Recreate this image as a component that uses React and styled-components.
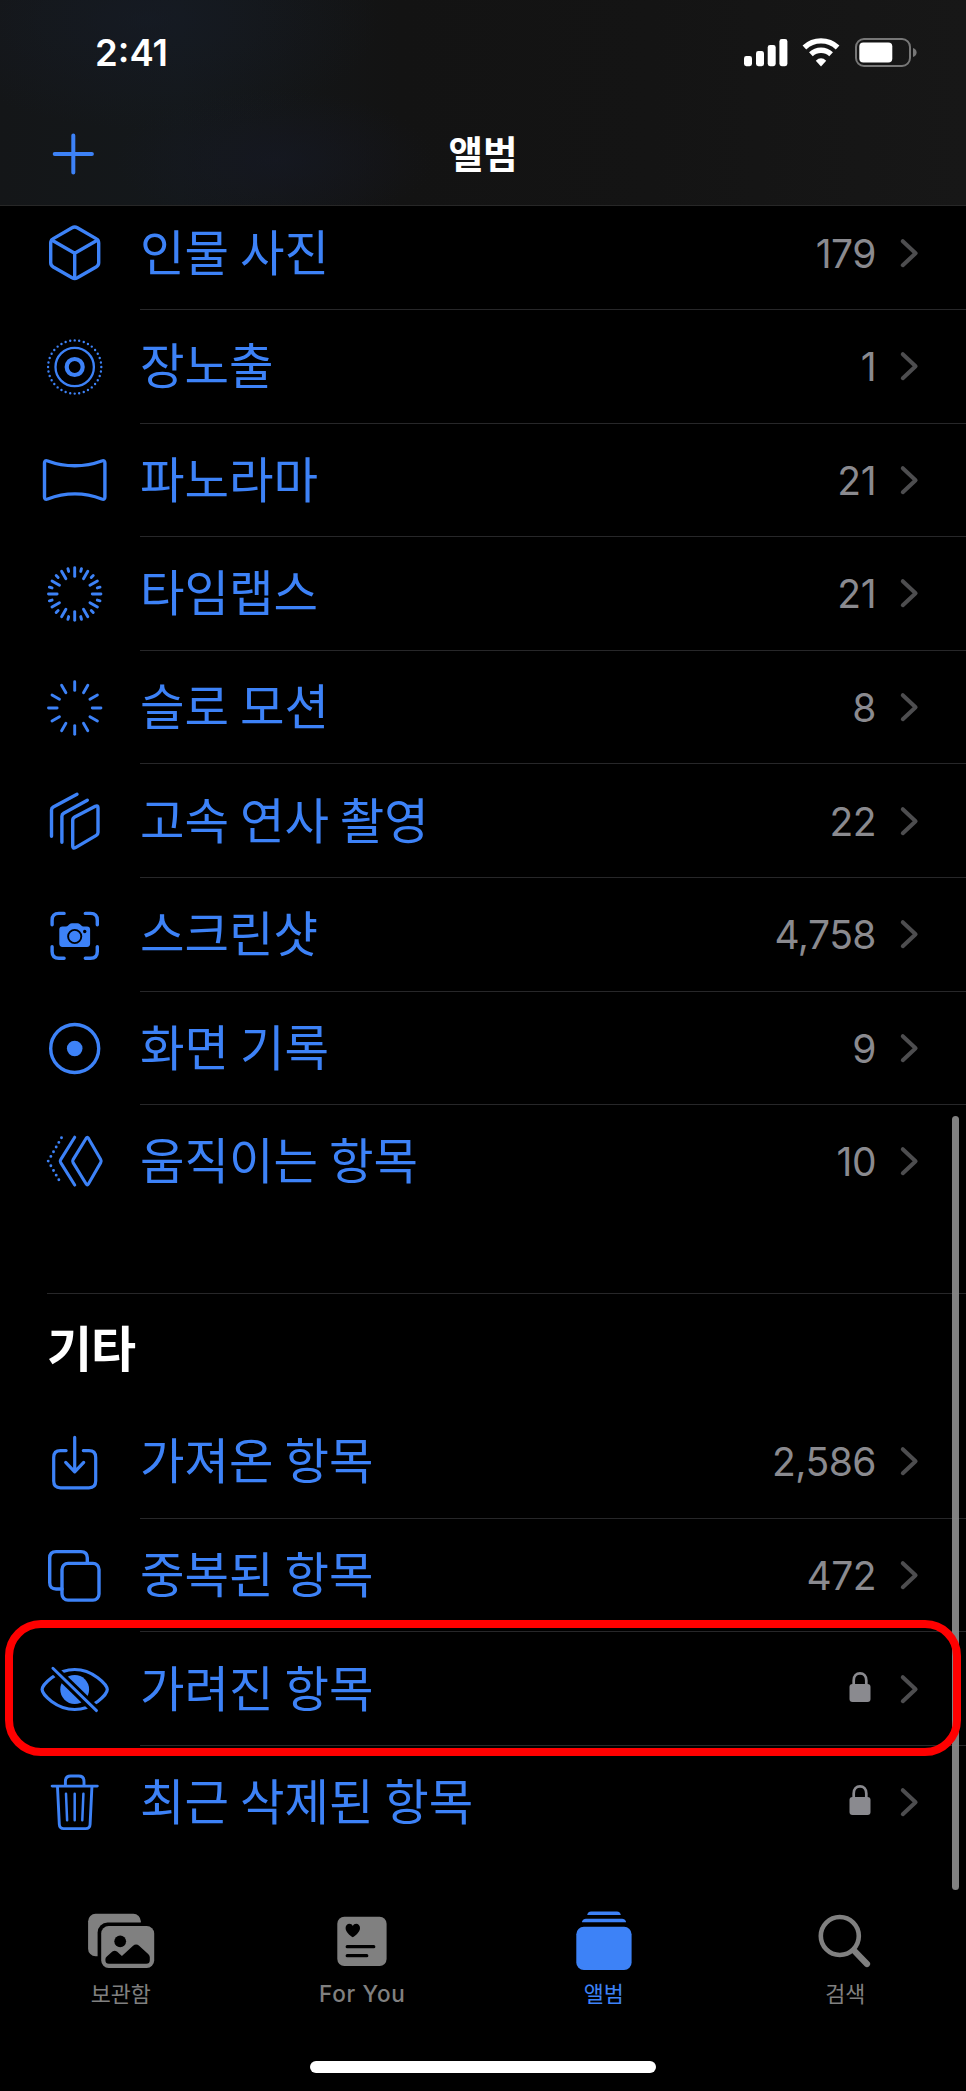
import React from 'react';
import styled, { createGlobalStyle, css } from 'styled-components';

const BLUE = '#3d82f7';
const GRAY = '#8a8a8f';
const TAB_GRAY = '#808080';
const LINE = '#272729';

const GlobalStyle = createGlobalStyle`
  * {
    box-sizing: border-box;
  }

  body {
    margin: 0;
    background: #000;
    font-family: Inter, 'Noto Sans CJK KR', sans-serif;
  }
`;

const Screen = styled.div`
  position: relative;
  width: 966px;
  height: 2091px;
  overflow: hidden;
  display: flex;
  flex-direction: column;
  background: #000;
`;

const Header = styled.header`
  position: relative;
  z-index: 1;
  flex: none;
  height: 206px;
  border-bottom: 1px solid #272727;
  background:
    radial-gradient(ellipse 230px 110px at 150px 20px, rgba(22, 28, 40, 0.6), transparent),
    radial-gradient(ellipse 160px 70px at 275px 160px, rgba(22, 25, 38, 0.6), transparent),
    linear-gradient(90deg, #141618 0, #14181b 180px, #131313 400px, #141414 650px, #171717 966px);
`;

const StatusBar = styled.div`
  height: 106px;
  padding: 0 49px 0 95px;
  display: flex;
  align-items: center;
  justify-content: space-between;
`;

const Time = styled.span`
  color: #fff;
  font-size: 36.5px;
  font-weight: 600;
  line-height: 44px;
`;

const StatusIcons = styled.svg`
  width: 176px;
  height: 34px;
  display: block;
`;

const NavBar = styled.div`
  height: 96px;
  padding: 0 49px;
  display: grid;
  grid-template-columns: 48px 1fr 48px;
  align-items: center;
`;

const AddButton = styled.button`
  padding: 0;
  border: 0;
  background: none;
  color: ${BLUE};
  line-height: 0;
`;

const Title = styled.h1`
  margin: 0;
  padding-bottom: 5px;
  color: #fff;
  font-family: 'Noto Sans CJK KR', sans-serif;
  font-size: 37.5px;
  font-weight: 700;
  line-height: 50px;
  text-align: center;
`;

const List = styled.ul`
  flex: none;
  margin: ${({ $first }) => ($first ? '-9.6px 0 0' : '0')};
  padding: 0;
  list-style: none;
`;

const Row = styled.li`
  position: relative;
  height: 113.6px;
  display: flex;

  &:last-child {
    height: 112px;
  }
`;

const IconSlot = styled.div`
  width: 140px;
  padding-left: 8px;
  display: flex;
  align-items: center;
  justify-content: center;
  color: ${BLUE};
`;

const RowBody = styled.div`
  flex: 1;
  padding-right: 45px;
  display: flex;
  align-items: center;
  border-bottom: 1px solid ${LINE};

  ${Row}:last-child & {
    border-bottom: 0;
  }
`;

const Label = styled.span`
  flex: 1;
  padding-bottom: 6px;
  color: ${BLUE};
  font-family: 'Noto Sans CJK KR', sans-serif;
  font-size: 48.4px;
  line-height: 70px;
`;

const Count = styled.span`
  margin-right: 23px;
  padding-top: 2px;
  color: ${GRAY};
  font-size: 39px;
  line-height: 50px;
  letter-spacing: -0.5px;
`;

const Highlight = styled.div`
  position: absolute;
  z-index: 2;
  top: -12.5px;
  left: 5px;
  right: 5px;
  height: 136px;
  border: 8px solid #ff0000;
  border-radius: 36px;
`;

const Section = styled.section`
  flex: none;
  margin-top: 76px;
`;

const SectionTitle = styled.h2`
  height: 112px;
  margin: 0 0 0 47px;
  padding-top: 16px;
  border-top: 1px solid ${LINE};
  color: #fff;
  font-family: 'Noto Sans CJK KR', sans-serif;
  font-size: 49px;
  font-weight: 700;
  line-height: 72px;
  letter-spacing: -1px;
`;

const TabBar = styled.nav`
  height: 202px;
  margin-top: auto;
  padding-top: 46px;
  display: grid;
  grid-template-columns: repeat(4, 1fr);
`;

const Tab = styled.div`
  display: flex;
  flex-direction: column;
  align-items: center;
  color: ${({ $active }) => ($active ? BLUE : TAB_GRAY)};
`;

const TabLabel = styled.span`
  margin-top: 2px;
  font-family: 'Noto Sans CJK KR', sans-serif;
  font-size: 21.8px;
  line-height: 32px;

  ${({ $latin }) =>
    $latin &&
    css`
      padding-top: 1px;
      font-family: Inter, sans-serif;
      font-size: 22.5px;
      font-weight: 500;
      letter-spacing: 0.7px;
    `}
`;

const HomeIndicator = styled.div`
  flex: none;
  width: 346px;
  height: 12px;
  margin: 0 auto 18.5px;
  border-radius: 6px;
  background: #fff;
`;

const ScrollThumb = styled.div`
  position: absolute;
  z-index: 1;
  top: 1116px;
  right: 7px;
  width: 7px;
  height: 774px;
  border-radius: 4px;
  background: rgba(136, 136, 136, 0.95);
`;

/* Row glyphs are drawn around the origin */
const Glyph = ({ size = 80, stroke = 3.4, shift = 0.7, children }) => (
  <svg
    width={size}
    height={size}
    viewBox={`${-size / 2 - shift} ${-size / 2} ${size} ${size}`}
    fill="none"
    stroke="currentColor"
    strokeWidth={stroke}
    strokeLinecap="round"
    strokeLinejoin="round"
  >
    {children}
  </svg>
);

const Portrait = () => (
  <Glyph>
    <path d="M-2.6 -25.2Q0 -26.7 2.6 -25.2L21.4 -14.4Q24 -12.8 24 -10V9.8Q24 12.4 21.4 14L2.6 24.8Q0 26.2 -2.6 24.8L-21.4 14Q-24 12.4 -24 9.8V-10Q-24 -12.8 -21.4 -14.4Z" />
    <path d="M-23 -13L0 0.2L23 -13M0 0.2V25" />
  </Glyph>
);

const LongExposure = () => (
  <Glyph>
    <circle r="8" strokeWidth="4.2" />
    <circle r="19.2" strokeWidth="2.3" />
    <circle r="26.6" strokeWidth="2.4" pathLength="36" strokeDasharray="0 1" />
  </Glyph>
);

const Panorama = () => (
  <Glyph>
    <path d="M-30.2 -17Q-30.2 -20.2 -27 -19Q-14 -14.2 0.2 -14.2Q14 -14.2 27 -19Q30.2 -20.2 30.2 -17V17Q30.2 20.2 27 19Q14 13.9 0.2 13.9Q-14 13.9 -27 19Q-30.2 20.2 -30.2 17Z" />
  </Glyph>
);

const ticks = Array.from({ length: 12 }, (_, i) => i * 30);

const TimeLapse = () => (
  <Glyph stroke={2.9}>
    {ticks.map((deg) => (
      <g key={deg}>
        <path d="M0 -26.2V-17.6" transform={`rotate(${deg})`} />
        <path d="M0 -26.2V-23.4" transform={`rotate(${deg + 15})`} />
      </g>
    ))}
  </Glyph>
);

const SloMo = () => (
  <Glyph stroke={2.9}>
    {ticks.map((deg) => (
      <path key={deg} d="M0 -26.2V-17.6" transform={`rotate(${deg})`} />
    ))}
  </Glyph>
);

const Burst = () => (
  <Glyph>
    <path d="M2.3 -26.7L-21.4 -14Q-23.2 -13 -23.2 -11V15.3" />
    <path d="M12.6 -20.8L-11 -7.7Q-12.8 -6.7 -12.8 -4.7V21.3" />
    <path d="M0 -4L20.6 -14.8Q23.3 -16 23.3 -13.2V11.6Q23.3 13.4 21.6 14.4L0.8 26.6Q-2 28 -2 25V-0.6Q-2 -2.9 0 -4Z" />
  </Glyph>
);

const Screenshot = () => (
  <Glyph>
    <g transform="translate(0 0.8)">
      <path d="M-22.6 -11V-15.6Q-22.6 -22.4 -15.8 -22.4H-10.6M10.6 -22.4H15.8Q22.6 -22.4 22.6 -15.6V-11M22.6 11V15.6Q22.6 22.4 15.8 22.4H10.6M-10.6 22.4H-15.8Q-22.6 22.4 -22.6 15.6V11" />
      <path
        d="M-12.3 -9.3H-8.7Q-7.5 -9.3 -6.6 -10.3L-5.3 -11.6Q-4.2 -12.6 -2.7 -12.6H2.7Q4.2 -12.6 5.3 -11.6L6.6 -10.3Q7.5 -9.3 8.7 -9.3H12.3Q15.4 -9.3 15.4 -6.2V8Q15.4 11.1 12.3 11.1H-12.3Q-15.4 11.1 -15.4 8V-6.2Q-15.4 -9.3 -12.3 -9.3Z"
        fill="currentColor"
        stroke="none"
      />
      <circle cy="0.7" r="6.6" stroke="#000" strokeWidth="1.9" />
      <circle cx="10" cy="-4.3" r="1.7" fill="#000" stroke="none" />
    </g>
  </Glyph>
);

const ScreenRecord = () => (
  <Glyph>
    <circle cy="0.5" r="24" />
    <circle cy="0.5" r="7.8" fill="currentColor" stroke="none" />
  </Glyph>
);

const Animated = () => (
  <Glyph stroke={3.1}>
    <path d="M-13.2 -23.3L-26.5 0.1L-13.2 23.5" strokeWidth="2.9" pathLength="10" strokeDasharray="0 1" />
    <path d="M0 -23.8L-14 -1.4Q-15 0.1 -14 1.6L0 24" />
    <path d="M11.5 -22.8Q12.6 -24.5 13.7 -22.8L26 -1.4Q26.9 0.1 26 1.6L13.7 23Q12.6 24.7 11.5 23L-1.6 1.6Q-2.5 0.1 -1.6 -1.4Z" />
  </Glyph>
);

const Imports = () => (
  <Glyph stroke={3.2}>
    <path d="M-8.6 -11.4H-14.2Q-21 -11.4 -21 -4.6V19Q-21 25.8 -14.2 25.8H14.2Q21 25.8 21 19V-4.6Q21 -11.4 14.2 -11.4H8.6" />
    <path d="M0 -24.6V9.6M-9 0.4L0 9.8L9 0.4" />
  </Glyph>
);

const Duplicates = () => (
  <Glyph>
    <path d="M12.6 -12.6V-18.2Q12.6 -24.4 6.2 -24.4H-18.6Q-25 -24.4 -25 -18V6.6Q-25 13 -18.6 13H-12.7" />
    <rect x="-12.7" y="-12.6" width="37" height="36.7" rx="6" />
  </Glyph>
);

const Hidden = () => (
  <Glyph stroke={3.2}>
    <path d="M-32.6 0.6C-32.6 -4.4 -18 -19.5 0 -19.5S32.6 -4.4 32.6 0.6S18 20.5 0 20.5S-32.6 5.6 -32.6 0.6Z" />
    <circle cy="0.5" r="14.4" fill="currentColor" stroke="none" />
    <path d="M-24 -22.8L24 24" stroke="#000" strokeWidth="9" strokeLinecap="butt" />
    <path d="M-21.8 -20.8L21.8 21.6" strokeWidth="2.9" />
  </Glyph>
);

const Trash = () => (
  <Glyph stroke={2.9}>
    <path d="M-22.6 -15.9H22.6M-9.3 -16V-20.6Q-9.3 -26 -4 -26H4Q9.3 -26 9.3 -20.6V-16" />
    <path d="M-17.2 -15L-15.4 22.2Q-15.2 26.6 -11 26.6H11Q15.2 26.6 15.4 22.2L17.2 -15" />
    <path d="M-8.7 -8.2L-7.6 18.2M0 -8.2V18.2M8.7 -8.2L7.6 18.2" strokeWidth="2.5" />
  </Glyph>
);

const LockIcon = styled.svg`
  width: 22px;
  height: 30px;
  margin: -3px 28px 0 0;
  color: ${GRAY};
`;

const Lock = () => (
  <LockIcon viewBox="0 0 22 30">
    <rect x="0.5" y="12" width="21" height="18" rx="3" fill="currentColor" />
    <path d="M4.7 13V8.4C4.7 3.8 7.4 1.4 11 1.4S17.3 3.8 17.3 8.4V13" fill="none" stroke="currentColor" strokeWidth="2.7" />
  </LockIcon>
);

const Chevron = styled.svg.attrs({
  viewBox: '0 0 22 32',
  children: <path d="M3.8 4.2L16.6 16.2L3.8 28.2" />
})`
  width: 22px;
  height: 32px;
  fill: none;
  stroke: #4d4d4f;
  stroke-width: 4;
  stroke-linecap: round;
  stroke-linejoin: round;
`;

const TabIcon = ({ children }) => (
  <svg width="80" height="70" viewBox="-40 -35 80 70" fill="currentColor">
    {children}
  </svg>
);

const LibraryIcon = () => (
  <TabIcon>
    <rect x="-32.9" y="-26.3" width="52.7" height="42.6" rx="7.5" />
    <rect x="-23.4" y="-17.4" width="60" height="48" rx="10" fill="#000" />
    <rect x="-19.8" y="-14" width="53" height="42" rx="7.5" />
    <circle cx="-0.8" cy="1.3" r="5.9" fill="#000" />
    <path
      d="M-15.6 19.3Q-15.6 17.7 -14.2 16.5L-8.6 11.6Q-6.3 9.7 -4 11.6L0.9 16L11.8 6Q15.1 3.2 18.4 6L27.4 14.2Q28.8 15.5 28.8 17.3V20.3Q28.8 23.8 25.3 23.8H-12.1Q-15.6 23.8 -15.6 20.3Z"
      fill="#000"
    />
  </TabIcon>
);

const ForYouIcon = () => (
  <TabIcon>
    <rect x="-24.7" y="-23.3" width="49.3" height="49.3" rx="7" />
    <path
      d="M-9.2 -2.8C-12.6 -4.8 -16.4 -8.2 -16.4 -12C-16.4 -14.6 -14.7 -16.3 -12.6 -16.3C-11.1 -16.3 -9.9 -15.5 -9.2 -14.1C-8.5 -15.5 -7.3 -16.3 -5.8 -16.3C-3.7 -16.3 -2 -14.6 -2 -12C-2 -8.2 -5.8 -4.8 -9.2 -2.8Z"
      fill="#000"
    />
    <path d="M-14.8 6.7H11.8M-14.8 15.7H4.8" stroke="#000" strokeWidth="3.2" strokeLinecap="round" />
  </TabIcon>
);

const AlbumsIcon = () => (
  <TabIcon>
    <path d="M-16.7 -25V-25.4Q-15.9 -28.4 -13 -28.4H13Q15.9 -28.4 16.7 -25.4V-25Z" />
    <path d="M-22.1 -17.7V-18.2Q-21 -21.3 -18 -21.3H18Q21 -21.3 22.1 -18.2V-17.7Z" />
    <rect x="-27.7" y="-13.3" width="55.3" height="43.2" rx="7.5" />
  </TabIcon>
);

const SearchIcon = () => (
  <TabIcon>
    <g fill="none" stroke="currentColor">
      <circle cx="-5.2" cy="-4" r="19" strokeWidth="4.6" />
      <path d="M9.6 11.2L22 24" strokeWidth="6.2" strokeLinecap="round" />
    </g>
  </TabIcon>
);

const mediaTypes = [
  { label: '인물 사진', count: '179', icon: Portrait },
  { label: '장노출', count: '1', icon: LongExposure },
  { label: '파노라마', count: '21', icon: Panorama },
  { label: '타임랩스', count: '21', icon: TimeLapse },
  { label: '슬로 모션', count: '8', icon: SloMo },
  { label: '고속 연사 촬영', count: '22', icon: Burst },
  { label: '스크린샷', count: '4,758', icon: Screenshot },
  { label: '화면 기록', count: '9', icon: ScreenRecord },
  { label: '움직이는 항목', count: '10', icon: Animated }
];

const utilities = [
  { label: '가져온 항목', count: '2,586', icon: Imports },
  { label: '중복된 항목', count: '472', icon: Duplicates },
  { label: '가려진 항목', locked: true, highlighted: true, icon: Hidden },
  { label: '최근 삭제된 항목', locked: true, icon: Trash }
];

const tabs = [
  { label: '보관함', icon: LibraryIcon },
  { label: 'For You', icon: ForYouIcon, latin: true },
  { label: '앨범', icon: AlbumsIcon, active: true },
  { label: '검색', icon: SearchIcon }
];

const AlbumRow = ({ label, count, locked, highlighted, icon: Icon }) => (
  <Row>
    <IconSlot>
      <Icon />
    </IconSlot>
    <RowBody>
      <Label>{label}</Label>
      {locked ? <Lock /> : <Count>{count}</Count>}
      <Chevron />
    </RowBody>
    {highlighted && <Highlight />}
  </Row>
);

const App = () => (
  <>
    <GlobalStyle />
    <Screen>
      <Header>
        <StatusBar>
          <Time>2:41</Time>
          <StatusIcons viewBox="0 0 176 34" fill="#fff">
            <rect x="3" y="20" width="8" height="10.2" rx="2.4" />
            <rect x="15" y="15" width="8" height="15.2" rx="2.4" />
            <rect x="26.7" y="9" width="8" height="21.2" rx="2.4" />
            <rect x="38.4" y="3" width="8" height="27.2" rx="2.4" />
            <g fill="none" stroke="#fff" strokeWidth="5.4">
              <path d="M63.4 11.4A24.4 24.4 0 0 1 96.6 11.4" />
              <path d="M69.9 18.3A14.8 14.8 0 0 1 90.1 18.3" />
            </g>
            <path d="M80 30.4L74.8 24.7Q80 20 85.2 24.7Z" />
            <rect x="115" y="3" width="54" height="27" rx="8" fill="none" stroke="#777" strokeWidth="2" />
            <rect x="118.3" y="6.4" width="33" height="20" rx="4" />
            <path d="M172 12Q175.6 13.2 175.6 16.5T172 21Z" fill="#777" />
          </StatusIcons>
        </StatusBar>
        <NavBar>
          <AddButton>
            <Glyph size={48} stroke={4} shift={0.3}>
              <path d="M-18.6 0H18.6M0 -18.6V18.6" />
            </Glyph>
          </AddButton>
          <Title>앨범</Title>
        </NavBar>
      </Header>

      <List $first>
        {mediaTypes.map((item) => (
          <AlbumRow key={item.label} {...item} />
        ))}
      </List>

      <Section>
        <SectionTitle>기타</SectionTitle>
        <List>
          {utilities.map((item) => (
            <AlbumRow key={item.label} {...item} />
          ))}
        </List>
      </Section>

      <TabBar>
        {tabs.map(({ label, icon: Icon, active, latin }) => (
          <Tab key={label} $active={active}>
            <Icon />
            <TabLabel $latin={latin}>{label}</TabLabel>
          </Tab>
        ))}
      </TabBar>
      <HomeIndicator />
      <ScrollThumb />
    </Screen>
  </>
);

export default App;
